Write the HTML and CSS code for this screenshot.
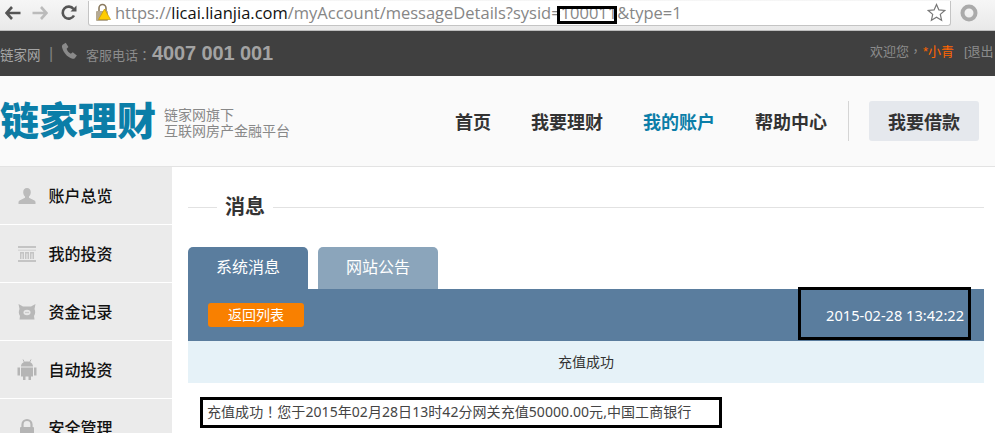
FILE: index.html
```html
<!DOCTYPE html>
<html lang="zh-Hans">
<head>
<meta charset="utf-8">
<title>消息</title>
<link rel="stylesheet" href="styles.css">
</head>
<body>
<div class="browser">
  <svg class="tb-icon back" width="16" height="14" viewBox="0 0 16 14"><path d="M7 1 1.500 7 7 13M2 7h13.500" fill="none" stroke="#555" stroke-width="2.600"/></svg>
  <svg class="tb-icon forward" width="16" height="14" viewBox="0 0 16 14"><path d="M9 1l5.500 6L9 13M14 7H.5" fill="none" stroke="#bbb" stroke-width="2.600"/></svg>
  <svg class="tb-icon reload" width="16" height="16" viewBox="0 0 16 16"><path d="M13 10.500A6 6 0 1 1 12.500 4" fill="none" stroke="#555" stroke-width="2.600"/><path d="M9.500 6.500H15.500V.5z" fill="#555"/></svg>
  <div class="omnibox">
    <svg class="lock" width="16" height="19" viewBox="0 0 16 19"><path d="M4 8V5a3.500 3.500 0 0 1 7 0v3" fill="none" stroke="#8a7a60" stroke-width="1.600"/><rect x="1" y="8" width="12" height="10" rx="1" fill="#b5aa94"/><path d="M9.500 6 15.500 16.500h-12z" fill="#fc0" stroke="#c79a00" stroke-width=".7"/></svg>
    <span class="url"><span class="dim">https://</span>licai.lianjia.com<span class="dim">/myAccount/messageDetails?sysid=100011&amp;type=1</span></span>
    <svg class="star" width="19" height="19" viewBox="0 0 19 19"><path d="M9.500 1.500l2.400 5.400 5.800.6-4.400 3.900 1.300 5.800-5.100-3-5.100 3 1.300-5.800L1.300 7.500l5.800-.6z" fill="#fff" stroke="#777" stroke-width="1.200"/></svg>
  </div>
  <svg class="menu-dot" width="18" height="18" viewBox="0 0 18 18"><circle cx="9" cy="9" r="6.500" fill="none" stroke="#aaa" stroke-width="4"/></svg>
</div>

<div class="topbar">
  <div class="topbar-left">
    <span class="home-link">链家网</span>
    <span class="sep">|</span>
    <svg class="phone" width="18" height="18" viewBox="0 0 16 17"><path d="M1 2.500 4 .8l2.500 4-1.700 1.500c.6 2 2 3.700 4 4.700l1.800-1.300 3.900 3-1.800 2.300c-.7.900-1.800 1-3 .6C5.200 14.200 1.800 10 .6 5.500.3 4.300.3 3.200 1 2.500z" fill="#8a8a8a"/></svg>
    <span class="service">客服电话<span class="punct" lang="zh-Hant">：</span></span>
    <span class="hotline">4007 001 001</span>
  </div>
  <div class="topbar-right">
    <span class="welcome">欢迎您<span class="punct" lang="zh-Hant">，</span></span><span class="user">*小青</span><span class="logout">[退出</span>
  </div>
</div>

<header class="header">
  <div class="logo">链家理财</div>
  <div class="slogan">链家网旗下<br>互联网房产金融平台</div>
  <nav class="nav">
    <a class="nav-item">首页</a>
    <a class="nav-item">我要理财</a>
    <a class="nav-item active">我的账户</a>
    <a class="nav-item">帮助中心</a>
    <span class="nav-divider"></span>
    <a class="nav-button">我要借款</a>
  </nav>
</header>

<div class="content">
  <aside class="sidebar">
    <div class="side-item">
      <svg width="20" height="20" viewBox="0 0 20 20"><path d="M10 2c2.500 0 3.800 1.800 3.800 4.200 0 1.800-.8 3.300-1.800 4.200v1.400l5.500 2.700c.7.400 1 1 1 1.700V18H1.500v-1.800c0-.7.300-1.300 1-1.700L8 11.800v-1.400C7 9.500 6.200 8 6.200 6.200 6.200 3.800 7.500 2 10 2z" fill="#bbb"/></svg>
      <span>账户总览</span>
    </div>
    <div class="side-item">
      <svg width="20" height="20" viewBox="0 0 20 20"><path d="M1 2h18v2H1zM1 16h18v2H1zM3 8h4v7H5.500V9.500h-1V15H3zM8 8h4v7h-1.500V9.500h-1V15H8zM13 8h4v7h-1.500V9.500h-1V15H13z" fill="#c4c4c4"/><path d="M1 5.500h18V7H1z" fill="#d8d8d8"/></svg>
      <span>我的投资</span>
    </div>
    <div class="side-item">
      <svg width="20" height="20" viewBox="0 0 20 20"><path d="M1.500 2 6 4.500h8L18.500 2l-1 5c1 2 1 5-.5 7l.5 3.500h-15L3 14C1.500 12 1.500 9 2.500 7z" fill="#b8b8b8"/><ellipse cx="10" cy="10.500" rx="3.500" ry="2.800" fill="#e8e8e8"/><circle cx="9" cy="10.500" r=".7" fill="#b8b8b8"/><circle cx="11" cy="10.500" r=".7" fill="#b8b8b8"/></svg>
      <span>资金记录</span>
    </div>
    <div class="side-item">
      <svg width="20" height="22" viewBox="0 0 20 22"><path d="M4 7.500C4 4.500 6.500 2.500 10 2.500s6 2 6 5zM4 8.500h12v9h-2v3.500h-2.500v-3.500h-3V21H6v-3.500H4zM.5 8.500h2.500v8H.5zM17 8.500h2.500v8H17z" fill="#b5b5b5"/><path d="M6 .5l1.500 3M14 .5l-1.500 3" stroke="#b5b5b5"/></svg>
      <span>自动投资</span>
    </div>
    <div class="side-item">
      <svg width="20" height="20" viewBox="0 0 20 20"><path d="M5.500 10V6.500a4.500 4.500 0 0 1 9 0V10" fill="none" stroke="#b5b5b5" stroke-width="2.200"/><rect x="3" y="9" width="14" height="10" rx="1" fill="#b5b5b5"/></svg>
      <span>安全管理</span>
    </div>
  </aside>

  <main class="main">
    <div class="title-row">
      <h1 class="title">消息</h1>
    </div>
    <div class="tabs">
      <div class="tab current">系统消息</div>
      <div class="tab">网站公告</div>
    </div>
    <div class="message-bar">
      <a class="back-btn">返回列表</a>
      <span class="time">2015-02-28 13:42:22</span>
    </div>
    <div class="message-subject">充值成功</div>
    <p class="message-body">充值成功<span class="punct" lang="zh-Hant">！</span>您于2015年02月28日13时42分网关充值50000.00元,中国工商银行</p>
  </main>
</div>

<div class="mark mark-url"></div>
<div class="mark mark-time"></div>
<div class="mark mark-body"></div>
</body>
</html>
```
FILE: styles.css
```css
* { box-sizing: border-box; }
html, body { margin: 0; padding: 0; }
body {
  position: relative;
  width: 995px;
  height: 433px;
  overflow: hidden;
  background: #fff;
  font-family: "Liberation Sans", "Noto Sans CJK SC", sans-serif;
}
.punct { font-family: "Noto Sans CJK TC", sans-serif; }

/* browser chrome */
.browser {
  display: flex;
  align-items: center;
  height: 31px;
  padding: 0 0 4px 5px;
  background: linear-gradient(#f6f6f6, #e9e9e9);
  border-bottom: 1px solid #bdbdbd;
}
.tb-icon { flex: none; }
.back { margin-right: 11px; }
.forward { margin-right: 13px; }
.reload { margin-right: 11px; }
.omnibox {
  display: flex;
  align-items: center;
  flex: none;
  width: 863px;
  height: 25px;
  padding: 0 4px 0 6px;
  background: #fff;
  border: 1px solid #c4c4c4;
  border-top: 0;
  border-radius: 0 0 3px 3px;
}
.lock { flex: none; margin-right: 4px; }
.url {
  flex: 1;
  font-family: "Open Sans", sans-serif;
  font-size: 16.5px;
  color: #111;
  white-space: nowrap;
}
.dim { color: #868686; }
.star { flex: none; }
.menu-dot { flex: none; margin-left: 9px; }

/* top bar */
.topbar {
  display: flex;
  justify-content: space-between;
  align-items: center;
  height: 45px;
  background: #404040;
  color: #8c8c8c;
  font-size: 13px;
  white-space: nowrap;
}
.topbar-left { display: flex; align-items: center; }
.home-link { width: 42px; margin-top: 1px; font-size: 13.5px; color: #a5a5a5; }
.sep { width: 12px; margin-left: 7px; font-size: 16px; color: #808080; }
.phone { margin-top: -6px; margin-right: 7px; }
.service { width: 66px; margin-top: 2px; }
.hotline { font-size: 20px; font-weight: bold; letter-spacing: -.1px; color: #a3a3a3; }
.topbar-right { display: flex; flex: none; width: 125px; padding-bottom: 7px; }
.welcome { width: 53px; }
.user { width: 41px; color: #f60; }
.logout { color: #8c8c8c; }

/* header */
.header {
  display: flex;
  align-items: center;
  height: 91px;
  background: #fafafa;
  border-bottom: 1px solid #e3e3e3;
}
.logo {
  flex: none;
  width: 164px;
  padding-bottom: 6px;
  font-family: "Noto Sans CJK SC", sans-serif;
  font-size: 39px;
  font-weight: 900;
  line-height: 50px;
  color: #0b7ea8;
  white-space: nowrap;
}
.slogan {
  flex: none;
  padding-top: 1px;
  font-family: "Noto Sans CJK SC", sans-serif;
  font-size: 14px;
  line-height: 16px;
  color: #888;
}
.nav {
  display: flex;
  align-items: center;
  margin-left: auto;
  margin-right: 16px;
  padding-bottom: 1px;
  font-family: "Noto Sans CJK SC", sans-serif;
  font-size: 18px;
  font-weight: 700;
  color: #333;
}
.nav-item { margin-right: 40px; }
.nav-item:nth-child(4) { margin-right: 21px; }
.nav-item.active { color: #0b7ea8; }
.nav-divider { width: 1px; height: 40px; margin-right: 20px; background: #d5d5d5; }
.nav-button {
  width: 110px;
  height: 40px;
  line-height: 40px;
  text-align: center;
  background: #e5e8ed;
  border-radius: 3px;
}

/* body */
.content { display: flex; align-items: flex-start; height: 266px; overflow: hidden; }
.sidebar {
  flex: none;
  width: 172px;
  font-family: "Noto Sans CJK SC", sans-serif;
  font-size: 16px;
  font-weight: 500;
  color: #111;
}
.side-item {
  display: flex;
  align-items: center;
  height: 58px;
  padding-left: 17px;
  background: #ebebeb;
  border-bottom: 1px solid #fff;
}
.side-item svg { flex: none; width: 20px; margin-right: 12px; }
.side-item span { margin-top: -2px; margin-left: -.5px; }

.main {
  flex: 1;
  padding: 0 11px 0 16px;
  font-family: "Noto Sans", "Noto Sans CJK SC", sans-serif;
}
.title-row {
  display: flex;
  align-items: center;
  height: 80px;
  background: linear-gradient(#e2e2e2, #e2e2e2) no-repeat 0 40px / 100% 1px;
}
.title {
  margin: -2px 0 0 29px;
  padding: 0 8px;
  background: #fff;
  font-family: "Noto Sans CJK SC", sans-serif;
  font-size: 20px;
  font-weight: 700;
  line-height: 30px;
  color: #333;
}
.tabs { display: flex; gap: 10px; height: 42px; }
.tab {
  width: 120px;
  line-height: 41px;
  text-align: center;
  font-size: 16px;
  color: #fff;
  background: #8ba5bb;
  border-radius: 5px 5px 0 0;
}
.tab.current { background: #5a7d9e; }
.message-bar {
  display: flex;
  align-items: center;
  justify-content: space-between;
  height: 52px;
  padding: 0 20px;
  background: #5a7d9e;
}
.back-btn {
  width: 96px;
  height: 24px;
  line-height: 23px;
  text-align: center;
  font-size: 14px;
  color: #fff;
  background: #f98000;
  border-radius: 3px;
}
.time {
  font-size: 14.6px;
  color: #fff;
}
.message-subject {
  height: 42px;
  line-height: 41px;
  text-align: center;
  font-size: 14px;
  color: #333;
  background: #e6f2f8;
}
.message-body {
  margin: 17px 0 0 19px;
  font-size: 14px;
  line-height: 22px;
  letter-spacing: .06px;
  color: #444;
  white-space: nowrap;
}

/* black annotation boxes drawn over the screenshot */
.mark { position: absolute; border: 3px solid #000; }
.mark-url { left: 557px; top: 6px; width: 60px; height: 18px; }
.mark-time { left: 798px; top: 287px; width: 173px; height: 53px; }
.mark-body { left: 200px; top: 397px; width: 522px; height: 31px; }
```
